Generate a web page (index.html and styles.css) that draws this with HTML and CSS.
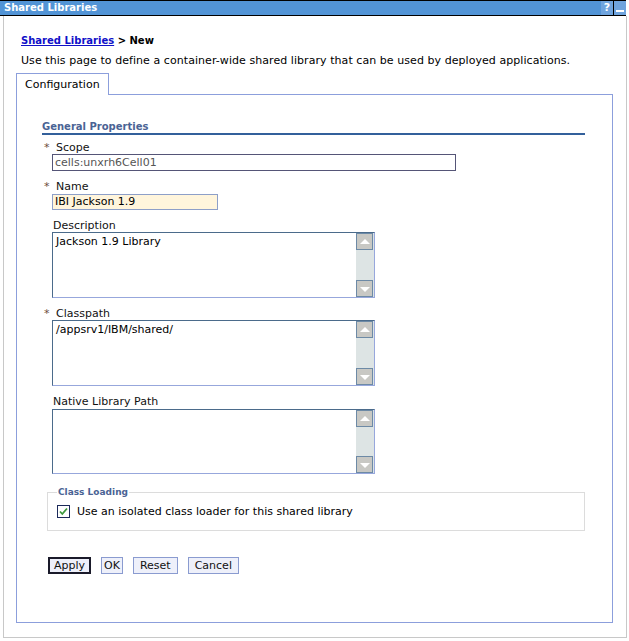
FILE: index.html
```html
<!DOCTYPE html>
<html>
<head>
<meta charset="utf-8">
<link rel="stylesheet" href="styles.css">
</head>
<body>
<div class="portlet">
  <div class="titlebar">
    <span class="title">Shared Libraries</span>
    <span class="tb-icons"><span class="tb-help">?</span><span class="tb-min"><span class="dash"></span></span></span>
  </div>
  <div class="pbody">
    <div class="crumb"><a href="#">Shared Libraries</a> &gt; New</div>
    <div class="intro">Use this page to define a container-wide shared library that can be used by deployed applications.</div>
    <div class="tabs"><div class="tab">Configuration</div><div class="tabfill"></div></div>
    <div class="panel">
      <div class="section">General Properties</div>

      <div class="field">
        <div class="label"><span class="req">*</span>Scope</div>
        <div class="input scope">cells:unxrh6Cell01</div>
      </div>

      <div class="field">
        <div class="label"><span class="req">*</span>Name</div>
        <div class="input name">IBI Jackson 1.9</div>
      </div>

      <div class="field">
        <div class="label">Description</div>
        <div class="tarea"><div class="ttext">Jackson 1.9 Library</div><div class="sbar"><span class="sbtn up"></span><span class="strack"></span><span class="sbtn down"></span></div></div>
      </div>

      <div class="field">
        <div class="label"><span class="req">*</span>Classpath</div>
        <div class="tarea"><div class="ttext">/appsrv1/IBM/shared/</div><div class="sbar"><span class="sbtn up"></span><span class="strack"></span><span class="sbtn down"></span></div></div>
      </div>

      <div class="field">
        <div class="label">Native Library Path</div>
        <div class="tarea native"><div class="ttext"></div><div class="sbar"><span class="sbtn up"></span><span class="strack"></span><span class="sbtn down"></span></div></div>
      </div>

      <fieldset class="group">
        <legend>Class Loading</legend>
        <label class="check"><span class="cbox"><svg width="11" height="11" viewBox="0 0 11 11"><path d="M2 5.5 L4.3 8 L9 2.5" fill="none" stroke="#3e9a3e" stroke-width="1.8"/></svg></span>Use an isolated class loader for this shared library</label>
      </fieldset>

      <div class="buttons">
        <span class="btn default">Apply</span>
        <span class="btn ok">OK</span>
        <span class="btn">Reset</span>
        <span class="btn">Cancel</span>
      </div>
    </div>
  </div>
</div>
</body>
</html>
```

FILE: styles.css
```css
html, body {
  margin: 0;
  padding: 0;
  background: #fff;
}
body {
  font-family: "DejaVu Sans", Verdana, sans-serif;
  font-size: 11px;
  color: #000;
}
.portlet {
  width: 629px;
}
.titlebar {
  width: 626px;
  height: 14px;
  border-top: 1px solid #000;
  border-bottom: 1px solid #000;
  background: #5294d6;
  display: flex;
  align-items: center;
  justify-content: space-between;
}
.title {
  color: #fff;
  font-weight: bold;
  font-size: 10px;
  padding-left: 4px;
  line-height: 14px;
}
.tb-icons {
  display: flex;
  height: 14px;
}
.tb-help {
  width: 12px;
  height: 14px;
  background: #6fa4de;
  color: #fff;
  font-weight: bold;
  font-size: 11px;
  line-height: 14px;
  text-align: center;
  border-right: 1px solid #000;
}
.tb-min {
  width: 12px;
  height: 14px;
  background: #6fa4de;
  position: relative;
}
.tb-min .dash {
  position: absolute;
  left: 2px;
  right: 2px;
  bottom: 3px;
  height: 2px;
  background: #fff;
}
.pbody {
  margin-left: 3px;
  border: 1px solid #c8c8c8;
  border-top: none;
  padding: 18px 13px 14px 12px;
  box-sizing: border-box;
  width: 624px;
}
.crumb {
  font-weight: bold;
  font-size: 10px;
  padding-left: 5px;
  line-height: 13px;
}
.crumb a {
  color: #1010c8;
  text-decoration: underline;
}
.intro {
  padding-left: 5px;
  margin-top: 7px;
  line-height: 13px;
  letter-spacing: 0.06px;
}
.tabs {
  display: flex;
  margin-top: 6px;
  height: 22px;
}
.tab {
  border: 1px solid #8c9fdc;
  border-bottom: none;
  padding: 0 8px;
  line-height: 22px;
}
.tabfill {
  flex: 1;
  border-bottom: 1px solid #8c9fdc;
}
.panel {
  border: 1px solid #8c9fdc;
  border-top: none;
  padding: 26px 26px 0 25px;
  height: 528px;
  box-sizing: border-box;
}
.section {
  font-weight: bold;
  font-size: 10px;
  color: #4a6394;
  border-bottom: 2px solid #33609b;
  line-height: 12px;
  margin-right: 1px;
}
.field {
  padding-left: 10px;
  margin-top: 9px;
}
.section + .field {
  margin-top: 6px;
}
.label {
  line-height: 13px;
  padding-left: 1px;
  color: #111;
}
.req {
  color: #6b4a3a;
  margin-left: -9px;
  display: inline-block;
  width: 12px;
}
.input {
  box-sizing: border-box;
  height: 17px;
  line-height: 15px;
  padding-left: 2px;
}
.input.scope {
  width: 404px;
  border: 1px solid #555577;
  color: #555;
}
.input.name {
  margin-top: 1px;
  width: 166px;
  height: 16px;
  line-height: 14px;
  border: 1px solid #8d9fc8;
  background: #fff5dc;
}
.tarea {
  width: 323px;
  height: 66px;
  box-sizing: border-box;
  border-top: 1px solid #4b6b8b;
  border-left: 1px solid #4b6b8b;
  border-right: 1px solid #97a7dc;
  border-bottom: 1px solid #97a7dc;
  display: flex;
}
.tarea.native {
  height: 65px;
  margin-top: 1px;
}
.ttext {
  flex: 1;
  padding: 2px 3px;
  line-height: 13px;
}
.sbar {
  width: 18px;
  display: flex;
  flex-direction: column;
  background: #dde4e4;
}
.sbtn {
  display: block;
  box-sizing: border-box;
  width: 17px;
  height: 17px;
  border: 1px solid #6d8aa6;
  background: #c8c8c4;
  position: relative;
}
.sbtn::after {
  content: "";
  position: absolute;
  left: 3px;
  width: 0;
  height: 0;
  border-left: 5px solid transparent;
  border-right: 5px solid transparent;
}
.sbtn.up::after {
  top: 5px;
  border-bottom: 5px solid #fff;
}
.sbtn.down::after {
  top: 6px;
  border-top: 5px solid #fff;
}
.strack {
  flex: 1;
}
.group {
  margin: 12px 1px 0 5px;
  border: 1px solid #dcdcdc;
  padding: 7px 9px 12px 9px;
}
.group legend {
  font-weight: bold;
  font-size: 9px;
  color: #4a6394;
  padding: 0 1px;
  line-height: 12px;
}
.check {
  display: flex;
  align-items: center;
  line-height: 13px;
}
.cbox {
  width: 11px;
  height: 11px;
  border: 1px solid #1c2a5a;
  margin-right: 7px;
  display: inline-flex;
  background: #fff;
}
.buttons {
  display: flex;
  gap: 10px;
  margin-top: 26px;
  padding-left: 6px;
}
.btn {
  box-sizing: border-box;
  height: 17px;
  line-height: 15px;
  padding: 0 6px;
  background: #eef0fa;
  border: 1px solid #8a9bd0;
  color: #111;
}
.btn.ok {
  padding: 0 2px;
}
.btn.default {
  border: 2px solid #1a1a2a;
  line-height: 13px;
  padding: 0 4px;
}
```
